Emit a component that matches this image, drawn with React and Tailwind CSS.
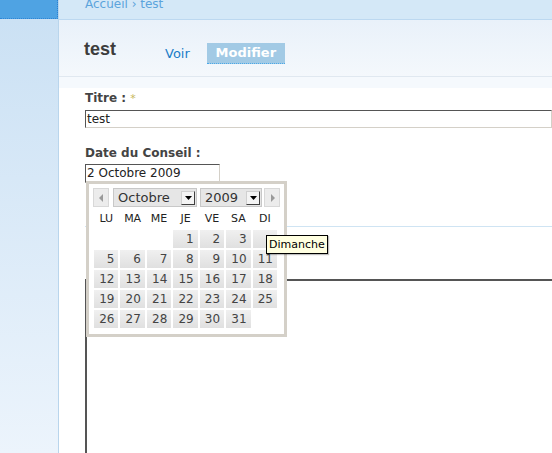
const font = { fontFamily: '"DejaVu Sans", Verdana, sans-serif' };

const weeks = [
  [null, null, null, 1, 2, 3, ''],
  [5, 6, 7, 8, 9, 10, 11],
  [12, 13, 14, 15, 16, 17, 18],
  [19, 20, 21, 22, 23, 24, 25],
  [26, 27, 28, 29, 30, 31, null],
];

const Arrow = ({ dir }) => (
  <svg width="5" height="8" viewBox="0 0 5 8">
    {dir === 'left' ? <path d="M4 0 L0 4 L4 8 Z" fill="#9a9a9a" /> : <path d="M1 0 L5 4 L1 8 Z" fill="#9a9a9a" />}
  </svg>
);

const DropButton = () => (
  <div className="w-[14px] h-[14px] bg-[#f4f4f4] border border-[#404040] border-l-[#d0d0d0] border-t-[#d0d0d0] flex items-center justify-center">
    <svg width="7" height="4" viewBox="0 0 7 4">
      <path d="M0 0 H7 L3.5 4 Z" fill="#000" />
    </svg>
  </div>
);

const Calendar = () => (
  <div className="absolute left-[86px] top-[181px] w-[201px] h-[156px] border-[3px] border-[#d4d0c8] bg-white" style={font}>
    <div className="flex items-center pl-[4px] pt-[4px] h-[23px]">
      <div className="w-[16px] h-[19px] bg-[#ececec] border border-[#d8d8d8] flex items-center justify-center">
        <Arrow dir="left" />
      </div>
      <div className="ml-[4px] w-[84px] h-[19px] bg-[#e6e6e6] border border-[#c8c8c8] flex items-center justify-between pl-[4px] pr-[1px]">
        <span className="text-[13px] text-[#333] leading-none">Octobre</span>
        <DropButton />
      </div>
      <div className="ml-[3px] w-[62px] h-[19px] bg-[#e6e6e6] border border-[#c8c8c8] flex items-center justify-between pl-[4px] pr-[1px]">
        <span className="text-[13px] text-[#333] leading-none">2009</span>
        <DropButton />
      </div>
      <div className="ml-[2px] w-[16px] h-[19px] bg-[#ececec] border border-[#d8d8d8] flex items-center justify-center">
        <Arrow dir="right" />
      </div>
    </div>
    <div className="pl-[5px] pr-[7px]">
      <div className="grid grid-cols-7 gap-x-[2px] h-[23px] items-center">
        {['LU', 'MA', 'ME', 'JE', 'VE', 'SA', 'DI'].map((d) => (
          <div key={d} className="text-center text-[11px] text-[#222] leading-none">{d}</div>
        ))}
      </div>
      <div className="grid grid-cols-7 gap-[2px]">
        {weeks.flat().map((d, i) =>
          d !== null ? (
            <div key={i} className="h-[18px] bg-gradient-to-b from-[#f0f0f0] to-[#e0e0e0] text-right pr-[4px] text-[12px] leading-[18px] text-[#444]">
              {d}
            </div>
          ) : (
            <div key={i} className="h-[18px]" />
          )
        )}
      </div>
    </div>
  </div>
);

export default function App() {
  return (
    <div className="relative w-[552px] h-[453px] overflow-hidden flex bg-white" style={font}>
      <div className="w-[59px] shrink-0 flex flex-col border-r border-[#b9d5ec]">
        <div className="h-[19px] shrink-0 bg-[#4fa3e3] border-b border-dotted border-[#2f86d6] border-r border-r-[#2a7fd0]" />
        <div className="flex-1 bg-gradient-to-b from-[#cbe1f4] to-[#ecf4fc]" />
      </div>
      <div className="flex-1 flex flex-col">
        <div className="h-[20px] shrink-0 bg-[#d4e8f7] border-b border-[#bcd8f0] pl-[26px] overflow-hidden">
          <div className="text-[12px] text-[#5ca4dc] leading-[12px] -mt-[2px]">Accueil › test</div>
        </div>
        <div className="h-[57px] shrink-0 bg-gradient-to-b from-[#e9f1fa] to-[#f4f8fc] border-b border-[#e0e8f0] flex items-start pl-[25px]">
          <h1 className="mt-[20px] text-[18px] font-bold text-[#3c3c3c] leading-none" style={{ fontFamily: '"Liberation Sans", Arial, sans-serif' }}>
            test
          </h1>
          <span className="ml-[49px] mt-[26px] text-[13px] text-[#1b7dc8] leading-[16px]">Voir</span>
          <span className="ml-[17px] mt-[23px] w-[78px] h-[21px] bg-[#a2cae5] border-b border-dotted border-[#4aa8e8] text-white text-[13px] font-bold flex items-center justify-center">
            Modifier
          </span>
        </div>
        <div className="h-[11px] shrink-0 bg-[#f5f9fd]" />
        <div className="pl-[26px] flex flex-col shrink-0">
          <div className="text-[12px] font-bold text-[#444] leading-[14px] mt-[3px]">
            Titre : <span className="text-[#c8b860] font-normal text-[11px]">*</span>
          </div>
          <div className="mt-[4px] h-[18px] border-t border-l border-[#555] border-b border-r border-b-[#d4d0c8] border-r-[#d4d0c8] text-[12px] text-[#222] leading-[16px] pl-[1px]">
            test
          </div>
          <div className="text-[12px] font-bold text-[#444] leading-[14px] mt-[18px]">Date du Conseil :</div>
          <div className="mt-[4px] w-[135px] h-[19px] border-t border-l border-[#555] border-b border-r border-b-[#d4d0c8] border-r-[#d4d0c8] text-[12px] text-[#222] leading-[17px] pl-[1px]">
            2 Octobre 2009
          </div>
          <div className="mt-[43px] border-t border-[#cfe4f3]" />
          <div className="mt-[52px] h-[200px] border-t-2 border-l-2 border-[#555]" />
        </div>
      </div>
      <Calendar />
      <div className="absolute left-[266px] top-[235px] h-[19px] px-[2px] bg-[#ffffe1] border border-black text-[11px] text-black leading-[17px] shadow-[1px_1px_1px_rgba(0,0,0,0.25)]" style={{ fontFamily: '"DejaVu Sans", Tahoma, sans-serif' }}>
        Dimanche
      </div>
    </div>
  );
}
